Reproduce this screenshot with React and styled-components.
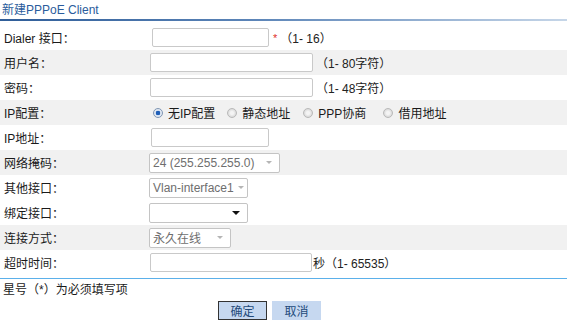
import React from 'react';
import styled, { createGlobalStyle } from 'styled-components';

const Global = createGlobalStyle`
  body {
    margin: 0;
    background: #fff;
    font-family: "Liberation Sans", "Noto Sans CJK SC", sans-serif;
    font-size: 12px;
    color: #1a1a1a;
  }
`;

const rows = [
  { label: 'Dialer 接口：', kind: 'input', width: 117, offset: 3, star: true, hint: '（1- 16）' },
  { label: '用户名：', kind: 'input', width: 163, offset: 1, hint: '（1- 80字符）', shade: true },
  { label: '密码：', kind: 'input', width: 163, offset: 1, hint: '（1- 48字符）' },
  { label: 'IP配置：', kind: 'radios', shade: true },
  { label: 'IP地址：', kind: 'input', width: 118, offset: 2 },
  { label: '网络掩码：', kind: 'select', width: 131, value: '24 (255.255.255.0)', shade: true },
  { label: '其他接口：', kind: 'select', width: 99, value: 'Vlan-interface1' },
  { label: '绑定接口：', kind: 'select', width: 99, value: '', active: true },
  { label: '连接方式：', kind: 'select', width: 82, value: '永久在线', shade: true },
  { label: '超时时间：', kind: 'input', width: 162, offset: 1, hint: '秒（1- 65535）', tight: true },
];

const radios = [
  { text: '无IP配置', checked: true, gap: 0 },
  { text: '静态地址', gap: 12 },
  { text: 'PPP协商', gap: 13 },
  { text: '借用地址', gap: 17 },
];

export default function App() {
  return (
    <Page>
      <Global />
      <Title>新建PPPoE Client</Title>
      <TitleRule />
      <Form>
        {rows.map((r) => (
          <Row key={r.label} shade={r.shade}>
            <Label>{r.label}</Label>
            <Field>
              {r.kind === 'input' && (
                <>
                  <TextBox style={{ width: r.width, marginLeft: r.offset }} />
                  {r.star && <Star>*</Star>}
                  {r.hint && <Hint tight={r.tight}>{r.hint}</Hint>}
                </>
              )}
              {r.kind === 'select' && (
                <Select style={{ width: r.width }} active={r.active}>
                  <span>{r.value}</span>
                  <Caret active={r.active} />
                </Select>
              )}
              {r.kind === 'radios' && (
                <RadioGroup>
                  {radios.map((o) => (
                    <RadioItem key={o.text} style={{ marginLeft: o.gap }}>
                      <RadioDot checked={o.checked} />
                      <span>{o.text}</span>
                    </RadioItem>
                  ))}
                </RadioGroup>
              )}
            </Field>
          </Row>
        ))}
      </Form>
      <BottomRule />
      <Note>星号（*）为必须填写项</Note>
      <Buttons>
        <Button primary>确定</Button>
        <Button>取消</Button>
      </Buttons>
    </Page>
  );
}

const Page = styled.div`
  width: 567px;
  height: 324px;
  overflow: hidden;
`;

const Title = styled.div`
  height: 19px;
  line-height: 20px;
  padding-left: 2px;
  color: #2a5c9c;
  font-size: 12px;
`;

const TitleRule = styled.div`
  height: 2px;
  background: linear-gradient(to right, #2f5d98 0%, #5c85b8 45%, #c6d6e8 100%);
`;

const Form = styled.div`
  padding-top: 4px;
`;

const Row = styled.div`
  display: flex;
  align-items: center;
  height: 25px;
  background: ${(p) => (p.shade ? '#f1f1f1' : '#fff')};
`;

const Label = styled.div`
  width: 148px;
  padding-left: 4px;
  box-sizing: border-box;
  flex-shrink: 0;
`;

const Field = styled.div`
  display: flex;
  align-items: center;
  padding-left: 1px;
`;

const TextBox = styled.div`
  height: 19px;
  box-sizing: border-box;
  border: 1px solid #c9c9c9;
  border-radius: 2px;
  background: #fff;
`;

const Star = styled.span`
  color: #e0302c;
  margin-left: 4px;
  font-size: 11px;
`;

const Hint = styled.span`
  margin-left: ${(p) => (p.tight ? '1px' : '3px')};
  color: #222;
`;

const Select = styled.div`
  height: 20px;
  box-sizing: border-box;
  border: 1px solid #c4c4c4;
  border-radius: 2px;
  background: #fff;
  display: flex;
  align-items: center;
  justify-content: space-between;
  padding: 0 7px 0 3px;
  color: #6e6e6e;
  font-size: 12px;
  white-space: nowrap;
  overflow: hidden;
`;

const Caret = styled.span`
  flex-shrink: 0;
  width: 0;
  height: 0;
  border-left: ${(p) => (p.active ? '4px' : '3px')} solid transparent;
  border-right: ${(p) => (p.active ? '4px' : '3px')} solid transparent;
  border-top: ${(p) => (p.active ? '4px solid #111' : '3px solid #b5b5b5')};
  margin-left: 4px;
`;

const RadioGroup = styled.div`
  display: flex;
  align-items: center;
  padding-left: 4px;
`;

const RadioItem = styled.label`
  display: flex;
  align-items: center;
  gap: 5px;
  font-size: 12px;
`;

const RadioDot = styled.span`
  width: 10px;
  height: 10px;
  border-radius: 50%;
  box-sizing: border-box;
  border: 1px solid ${(p) => (p.checked ? '#8096b3' : '#b9b9b9')};
  background: ${(p) =>
    p.checked
      ? 'radial-gradient(circle, #1f5fb8 0 2px, #dfe7f2 2.6px)'
      : 'radial-gradient(circle, #f4f4f4 0 1.5px, #dadada 4px)'};
`;

const BottomRule = styled.div`
  height: 1px;
  margin-top: 3px;
  background: #5bb0ea;
`;

const Note = styled.div`
  padding-left: 3px;
  line-height: 22px;
  height: 21px;
`;

const Buttons = styled.div`
  display: flex;
  gap: 5px;
  padding-left: 218px;
  margin-top: 1px;
`;

const Button = styled.div`
  width: 49px;
  height: 19px;
  box-sizing: border-box;
  display: flex;
  align-items: center;
  justify-content: center;
  background: #c6d8f0;
  color: #234a7a;
  border: ${(p) => (p.primary ? '1px solid #333' : '1px solid #c6d8f0')};
`;
